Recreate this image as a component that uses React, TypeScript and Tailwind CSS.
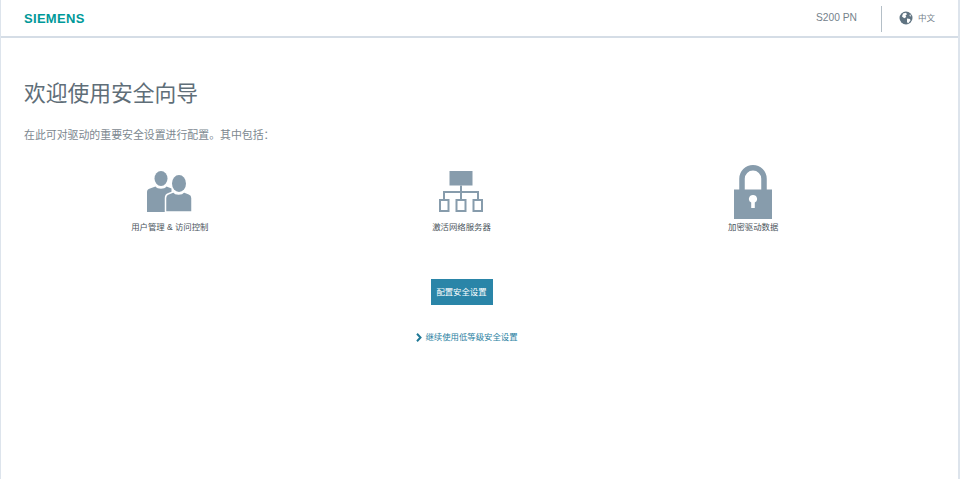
const cjk = "font-['Liberation_Sans','Noto_Sans_CJK_SC',sans-serif]";

function UsersIcon() {
  return (
    <svg className="mb-px" width="45" height="41" viewBox="0 0 45 41" fill="#879cac">
      <ellipse cx="14" cy="7.500" rx="6.500" ry="7.500" />
      <path d="M0 41V21c0-2 1-3 3-3.500l5.500-2c2 3 9 3 11 0l5 2V41z" />
      <ellipse cx="32" cy="12.500" rx="7" ry="8.500" />
      <path
        d="M18.500 41V27c0-2.500 1-3.500 3-4.200l5-2c2 3 8 3 10.500 0l5 2c2 .7 3 1.700 3 4.200V41z"
        stroke="#fff"
        strokeWidth="1.500"
      />
    </svg>
  );
}

function NetworkIcon() {
  return (
    <svg className="mb-px" width="44" height="41" viewBox="0 0 44 41" fill="none">
      <rect x="10.500" y="0" width="23" height="14.500" fill="#879cac" />
      <path d="M22 14.500V29M5 28v-7h34v7" stroke="#879cac" strokeWidth="2" />
      <rect x="1" y="29" width="8.500" height="11" stroke="#879cac" strokeWidth="2" />
      <rect x="17.500" y="29" width="9" height="11" stroke="#879cac" strokeWidth="2" />
      <rect x="34.500" y="29" width="8.500" height="11" stroke="#879cac" strokeWidth="2" />
    </svg>
  );
}

function LockIcon() {
  return (
    <svg width="38" height="54" viewBox="0 0 38 54" fill="none">
      <path d="M8 25V13.750a11 11 0 0 1 22 0V25" stroke="#879cac" strokeWidth="5.500" />
      <path
        fillRule="evenodd"
        d="M0 24.500h38V54H0zM19 30a4 4 0 0 0-1.800 7.600V43h3.600v-5.400A4 4 0 0 0 19 30z"
        fill="#879cac"
      />
    </svg>
  );
}

function GlobeIcon() {
  return (
    <svg width="14" height="14" viewBox="0 0 14 14">
      <circle cx="7" cy="7" r="6.500" fill="#5f7381" />
      <path d="M4 2.500l3-.8 1 1.500-1.500 1.300.8 1.500-2 1.200L3 5.500zM8 7.500l3 .5.500 1.500L9 12.500l-1-1.500zM11 3l1.200 2.500-1.700-.5z" fill="#fff" />
    </svg>
  );
}

const features = [
  { label: "用户管理 & 访问控制", icon: <UsersIcon /> },
  { label: "激活网络服务器", icon: <NetworkIcon /> },
  { label: "加密驱动数据", icon: <LockIcon /> },
];

export default function App() {
  return (
    <div className={`h-[479px] w-[964px] overflow-hidden bg-white ${cjk}`}>
      <div className="flex h-full w-[960px] flex-col border-r-2 border-l border-[#dde4ec]">
        <header className="flex h-[38px] shrink-0 items-center border-b-2 border-[#d5dde6] pl-[23px]">
          <span className="text-[13px] leading-none font-bold tracking-[0.3px] text-[#009999]">SIEMENS</span>
          <span className="ml-auto text-[10.250px] text-[#75828c]">S200 PN</span>
          <span className="mt-px mr-[17px] ml-[24px] h-[26px] w-px bg-[#b4bfc7]" />
          <GlobeIcon />
          <span className="mr-[23px] ml-[5px] text-[8.500px] text-[#75828c]">中文</span>
        </header>
        <main className="flex flex-1 flex-col pt-[41px] pl-[23px]">
          <h1 className="text-[21.750px] leading-[30px] text-[#5f6e78]">欢迎使用安全向导</h1>
          <p className="mt-[18px] text-[10.900px] leading-[16px] text-[#7c8890]">在此可对驱动的重要安全设置进行配置。其中包括：</p>
          <div className="mt-[22px] grid w-[875px] grid-cols-3">
            {features.map((f) => (
              <div key={f.label} className="flex flex-col items-center">
                <div className="flex h-[54px] items-center">{f.icon}</div>
                <span className="mt-[1px] text-[8.400px] leading-[14px] text-[#4a545c]">{f.label}</span>
              </div>
            ))}
          </div>
          <div className="mt-[45px] flex w-[875px] flex-col items-center">
            <button className="h-[26px] w-[62px] bg-[#2a85a8] text-[8.400px] text-white">配置安全设置</button>
            <a className="mt-[25px] ml-[11px] flex items-center gap-[3px] text-[8.400px] leading-[14px] text-[#2a7f9f]">
              <svg width="6" height="9" viewBox="0 0 6 9" fill="none">
                <path d="M1 .8L4.500 4.500 1 8.200" stroke="#1f7896" strokeWidth="2" />
              </svg>
              继续使用低等级安全设置
            </a>
          </div>
        </main>
      </div>
    </div>
  );
}
